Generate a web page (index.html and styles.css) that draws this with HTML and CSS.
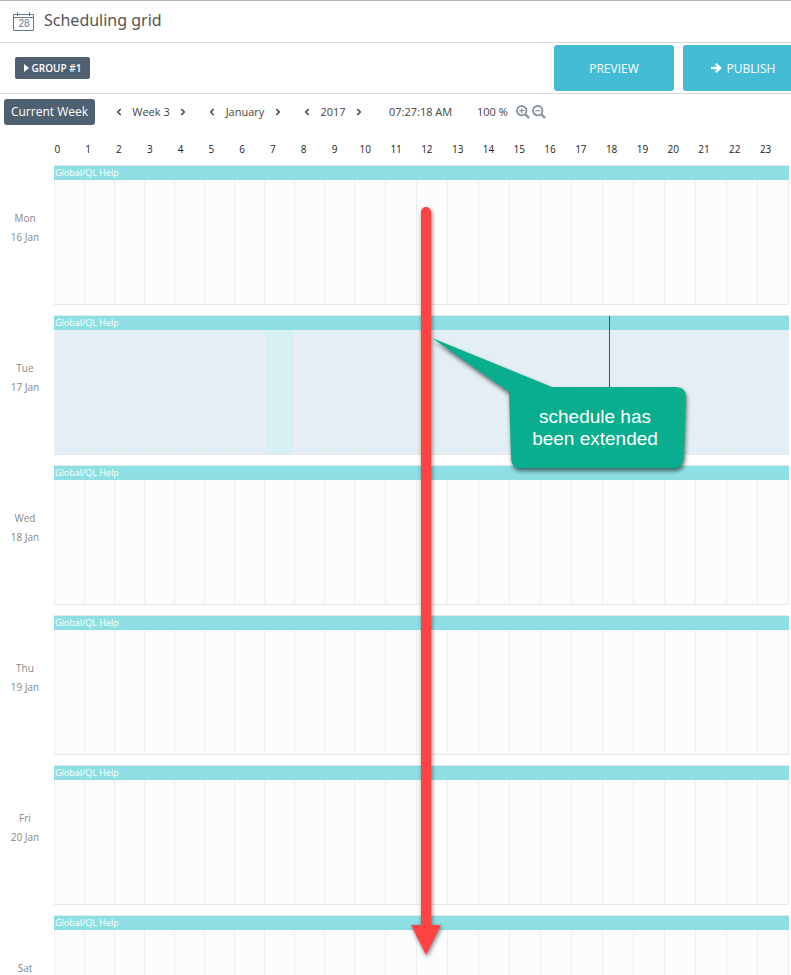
FILE: index.html
```
<!DOCTYPE html>
<html lang="en">
<head>
  <meta charset="UTF-8">
  <title>Scheduling grid</title>
  <meta name="viewport" content="width=device-width, initial-scale=1.0">
  <link rel="stylesheet" href="styles.css">
</head>
<body>
  <header class="page-header">
    <svg class="calendar-icon" width="22" height="20" viewBox="0 0 22 20" fill="none" stroke="#66788c">
      <path d="M.5 2.500h20v16H.5zM.5 5.500h20M4.500 0v4M16.500 0v4"/>
      <text x="11" y="15" text-anchor="middle">28</text>
    </svg>
    <h1>Scheduling grid</h1>
  </header>

  <div class="toolbar">
    <button type="button" class="group-btn">
      <svg width="5" height="8" viewBox="0 0 5 8"><path d="M0 0l5 4-5 4z" fill="#fff"/></svg>
      GROUP #1
    </button>
    <div class="actions">
      <button type="button" class="action-btn">PREVIEW</button>
      <button type="button" class="action-btn">
        <svg width="11" height="10" viewBox="0 0 11 10" fill="none" stroke="#fff" stroke-width="2.4"><path d="M0 5h9M4.8 .9L9 5 4.8 9.1"/></svg>
        PUBLISH
      </button>
    </div>
  </div>

  <nav class="date-nav">
    <button type="button" class="current-btn">Current Week</button>
    <div class="stepper week">
      <button type="button" aria-label="Previous week"><svg width="6" height="8" viewBox="0 0 6 8"><path d="M4.7 1L1.7 4l3 3"/></svg></button>
      <span>Week 3</span>
      <button type="button" aria-label="Next week"><svg width="6" height="8" viewBox="0 0 6 8"><path d="M1.3 1l3 3-3 3"/></svg></button>
    </div>
    <div class="stepper month">
      <button type="button" aria-label="Previous month"><svg width="6" height="8" viewBox="0 0 6 8"><path d="M4.7 1L1.7 4l3 3"/></svg></button>
      <span>January</span>
      <button type="button" aria-label="Next month"><svg width="6" height="8" viewBox="0 0 6 8"><path d="M1.3 1l3 3-3 3"/></svg></button>
    </div>
    <div class="stepper year">
      <button type="button" aria-label="Previous year"><svg width="6" height="8" viewBox="0 0 6 8"><path d="M4.7 1L1.7 4l3 3"/></svg></button>
      <span>2017</span>
      <button type="button" aria-label="Next year"><svg width="6" height="8" viewBox="0 0 6 8"><path d="M1.3 1l3 3-3 3"/></svg></button>
    </div>
    <span class="clock">07:27:18 AM</span>
    <span class="zoom-level">100 %</span>
    <div class="zoom">
      <button type="button" aria-label="Zoom in">
        <svg width="14" height="14" viewBox="0 0 14 14"><circle cx="5.7" cy="5.7" r="4.7"/><path d="M9.2 9.2l3.8 3.8" stroke-width="2.4"/><path d="M3.2 5.7h5M5.7 3.2v5" stroke-width="1.2"/></svg>
      </button>
      <button type="button" aria-label="Zoom out">
        <svg width="14" height="14" viewBox="0 0 14 14"><circle cx="5.7" cy="5.7" r="4.7"/><path d="M9.2 9.2l3.8 3.8" stroke-width="2.4"/><path d="M3.2 5.7h5" stroke-width="1.2"/></svg>
      </button>
    </div>
  </nav>

  <div class="hours" id="hours"></div>

  <main class="schedule">
    <div id="days"></div>

    <svg class="arrow" width="40" height="760" viewBox="0 0 40 760">
      <path d="M15 12a5 5 0 0 1 10 0V725H35L20 755 5 725H15z" fill="#ff4343"/>
    </svg>

    <div class="callout">
      <svg width="270" height="150" viewBox="0 0 270 150">
        <path d="M12 8L132 57H256Q266 57 266 67L264 128Q263 138 253 138H101Q91 138 91 128L89 62Z" fill="#08ae8e"/>
      </svg>
      <p>schedule has<br>been extended</p>
    </div>
  </main>

  <script>
    const days = [
      ["Mon", "16 Jan"],
      ["Tue", "17 Jan"],
      ["Wed", "18 Jan"],
      ["Thu", "19 Jan"],
      ["Fri", "20 Jan"],
      ["Sat", ""]
    ];
    const today = 1;
    const currentHour = 7;

    const hoursEl = document.getElementById("hours");
    for (let h = 0; h < 24; h++) {
      const span = document.createElement("span");
      span.textContent = h;
      hoursEl.appendChild(span);
    }

    const daysEl = document.getElementById("days");
    days.forEach(function(day, i) {
      let cells = "";
      for (let h = 0; h < 24; h++) {
        cells += '<div class="cell' + (i === today && h === currentHour ? " now" : "") + '"></div>';
      }
      const row = document.createElement("section");
      row.className = "day" + (i === today ? " today" : "");
      row.innerHTML =
        '<div class="day-label"><div>' + day[0] + "</div><div>" + day[1] + "</div></div>" +
        '<div class="day-grid">' +
          '<div class="team">Global/QL Help</div>' +
          '<div class="cells">' + cells + "</div>" +
          (i === today ? '<div class="marker"></div>' : "") +
        "</div>";
      daysEl.appendChild(row);
    });
  </script>
</body>
</html>
```
FILE: styles.css
```
body {
  margin: 0;
  height: 100vh;
  box-sizing: border-box;
  overflow: hidden;
  border-top: 1px solid #b4b4b4;
  background: #fff;
  color: #444;
  font-family: "Open Sans", "Noto Sans", sans-serif;
  font-size: 11px;
}
button {
  border: none;
  padding: 0;
  background: none;
  color: inherit;
  font: inherit;
  cursor: pointer;
}
svg {
  display: block;
}

.page-header {
  display: flex;
  align-items: center;
  gap: 9px;
  height: 41px;
  padding: 0 13px;
  border-bottom: 1px solid #dadada;
}
.page-header h1 {
  margin: 0;
  padding-bottom: 3px;
  font-family: "Noto Sans", "Open Sans", sans-serif;
  font-size: 16px;
  line-height: 38px;
  font-weight: 400;
  color: #555;
}
.calendar-icon text {
  fill: #66788c;
  stroke: none;
  font-family: "Liberation Sans", Arial, sans-serif;
  font-size: 10px;
}

.toolbar {
  display: flex;
  align-items: center;
  justify-content: space-between;
  height: 50px;
  padding-left: 15px;
  border-bottom: 1px solid #dadada;
}
.group-btn {
  display: flex;
  align-items: center;
  justify-content: center;
  gap: 3px;
  width: 75px;
  height: 22px;
  border-radius: 2px;
  background: #4f6070;
  color: #fff;
  font-size: 10px;
  font-weight: 600;
}
/* the last button runs past the right edge */
.actions {
  display: flex;
  gap: 9px;
  margin-right: -12px;
}
.action-btn {
  display: flex;
  align-items: center;
  justify-content: center;
  gap: 5px;
  width: 120px;
  height: 46px;
  border-radius: 3px;
  background: #44bbd4;
  color: #fff;
  font-size: 12px;
}

.date-nav {
  display: flex;
  align-items: center;
  height: 35px;
  padding-left: 4px;
}
.current-btn {
  width: 91px;
  height: 26px;
  margin-right: 21px;
  border-radius: 3px;
  background: #4f6070;
  color: #fff;
  font-size: 12px;
  font-weight: 500;
}
.stepper {
  display: flex;
  align-items: center;
  justify-content: space-between;
  margin-right: 23px;
}
.stepper svg {
  fill: none;
  stroke: #444;
  stroke-width: 1.5;
}
.week {
  width: 70px;
}
.month {
  width: 72px;
}
.year {
  width: 58px;
}
.clock {
  margin-left: 4px;
  width: 88px;
}
.zoom-level {
  width: 39px;
}
.zoom {
  display: flex;
  gap: 2px;
}
.zoom svg {
  fill: none;
  stroke: #8b959f;
  stroke-width: 1.9;
}

.hours {
  display: grid;
  grid-template-columns: repeat(24, 1fr);
  height: 36px;
  margin: 0 10px 0 42px;
  line-height: 40px;
  font-size: 10px;
  font-weight: 500;
  color: #222;
  text-align: center;
}

.schedule {
  position: relative;
}
.day {
  display: flex;
  height: 140px;
  margin-bottom: 10px;
}
.day-label {
  width: 50px;
  margin-right: 4px;
  padding-top: 44px;
  box-sizing: border-box;
  line-height: 19px;
  font-size: 10px;
  font-weight: 500;
  text-align: center;
  color: #888;
}
.day-grid {
  position: relative;
  flex: 1;
  display: flex;
  flex-direction: column;
  margin-right: 2px;
  border-top: 1px solid #e3eaec;
  border-bottom: 1px solid #e6e8ea;
}
.team {
  height: 14px;
  padding-left: 1px;
  background: #8ddfe3;
  color: #fff;
  font-size: 9px;
  line-height: 14px;
  font-weight: 500;
}
.cells {
  flex: 1;
  display: grid;
  grid-template-columns: repeat(10, 30fr) repeat(14, 31fr);
  border-right: 1px solid #e9ebed;
  background: #fbfcfe;
}
.cell {
  border-left: 1px solid #eceef0;
}
.today .cells {
  background: #e4eff5;
}
.cell.now {
  background: #d6f0f4;
}
.marker {
  position: absolute;
  top: 0;
  bottom: 0;
  left: 555px;
  width: 1px;
  background: #d01420;
}

.arrow {
  position: absolute;
  top: 35px;
  left: 406px;
  filter: drop-shadow(1px 2px 2px rgba(0,0,0,0.5));
}
.callout {
  position: absolute;
  top: 165px;
  left: 420px;
  width: 270px;
}
.callout svg {
  filter: drop-shadow(1px 3px 2px rgba(0,0,0,0.55));
}
.callout p {
  position: absolute;
  top: 76px;
  left: 88px;
  width: 174px;
  margin: 0;
  font-family: "Liberation Sans", Arial, sans-serif;
  font-size: 19px;
  line-height: 22px;
  text-align: center;
  color: #fff;
}
```
